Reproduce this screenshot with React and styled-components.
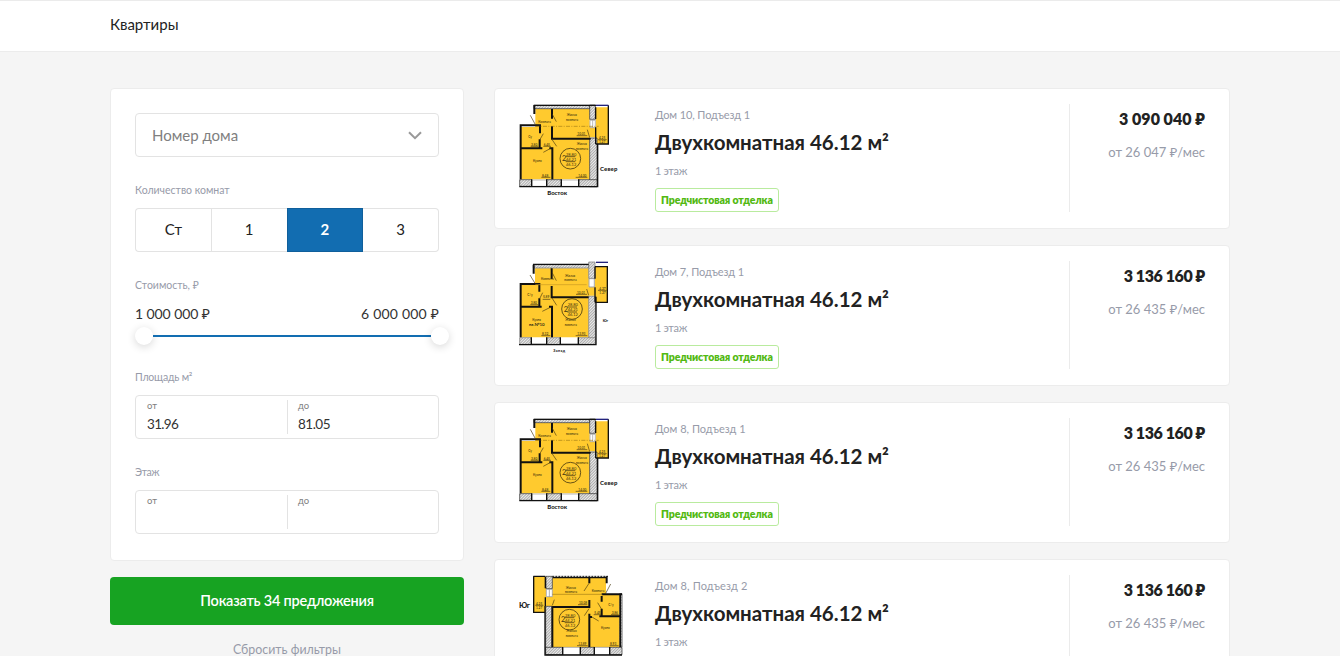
import React from 'react';
import styled, { createGlobalStyle } from 'styled-components';

const GlobalStyle = createGlobalStyle`
  * { box-sizing: border-box; }
  html, body { margin: 0; }
  body {
    background: #f5f5f5;
    color: #222;
    font-family: Lato, "Noto Sans", sans-serif;
  }
  button, input { font-family: inherit; }
`;

const Page = styled.div`
  height: 656px;
  overflow: hidden;
`;

const Text = styled.span`
  letter-spacing: ${(p) => p.$track || 0}px;
  white-space: nowrap;
`;

/* Header */
const Header = styled.header`
  height: 52px;
  background: #fff;
  border-top: 1px solid #ebebeb;
  border-bottom: 1px solid #ececec;
`;
const Container = styled.div`
  width: 1120px;
  margin: 0 auto;
`;
const Title = styled.h1`
  margin: 0;
  font-size: 15px;
  font-weight: 400;
  line-height: 47px;
`;

/* Layout */
const Columns = styled(Container)`
  display: flex;
  gap: 30px;
  padding-top: 36px;
  height: 604px;
`;
const Sidebar = styled.aside`
  width: 354px;
  flex: none;
`;
const List = styled.main`
  width: 736px;
  display: flex;
  flex-direction: column;
  gap: 16px;
`;

/* Filter panel */
const Panel = styled.section`
  height: 473px;
  padding: 24px;
  background: #fff;
  border: 1px solid #ececec;
  border-radius: 4px;
`;
const Select = styled.div`
  height: 44px;
  display: flex;
  align-items: center;
  justify-content: space-between;
  padding: 0 16px;
  border: 1px solid #e3e3e3;
  border-radius: 4px;
  color: #808080;
  font-size: 15px;
  line-height: 20px;

  ${Text} { margin-bottom: 1px; }
`;
const Label = styled.div`
  height: 16px;
  margin: ${(p) => p.$top}px 0 ${(p) => p.$bottom}px;
  color: #979ba9;
  font-size: 10.5px;
  line-height: 16px;
`;
const Rooms = styled.div`
  display: flex;
  height: 44px;
`;
const Room = styled.button`
  flex: 1;
  padding: 0 0 2px;
  background: ${(p) => (p.$active ? '#126db1' : '#fff')};
  border: 1px solid ${(p) => (p.$active ? '#0f5f9b' : '#e3e3e3')};
  border-right-width: ${(p) => (p.$active || p.$last ? 1 : 0)}px;
  border-left-width: ${(p) => (p.$last ? 0 : 1)}px;
  border-radius: ${(p) => (p.$first ? '4px 0 0 4px' : p.$last ? '0 4px 4px 0' : 0)};
  color: ${(p) => (p.$active ? '#fff' : '#222')};
  font-size: 15px;
  font-weight: ${(p) => (p.$active ? 700 : 400)};
`;
const PriceRange = styled.div`
  display: flex;
  justify-content: space-between;
  color: #333;
  font-size: 14px;
  line-height: 20px;
`;
const Slider = styled.div`
  display: flex;
  align-items: center;
  height: 18px;
  margin: 3px -10px 0 0;
`;
const Handle = styled.span`
  width: 18px;
  height: 18px;
  border-radius: 50%;
  background: #fff;
  box-shadow: 0 2px 8px rgba(0, 0, 0, 0.16);
`;
const Track = styled.span`
  flex: 1;
  height: 2px;
  background: #126db1;
`;
const Range = styled.div`
  display: flex;
  height: 44px;
  padding: 4px 0;
  border: 1px solid #e3e3e3;
  border-radius: 4px;
`;
const Bound = styled.div`
  width: ${(p) => (p.$first ? 152 : 150)}px;
  padding-left: ${(p) => (p.$first ? 11 : 10)}px;
  border-right: ${(p) => (p.$first ? '1px solid #e3e3e3' : 0)};
`;
const BoundName = styled.div`
  color: #808080;
  font-size: 9.5px;
  line-height: 12px;
`;
const BoundValue = styled.div`
  padding-top: 2px;
  color: #333;
  font-size: 13.5px;
  line-height: 20px;
`;
const Submit = styled.button`
  display: block;
  width: 100%;
  height: 48px;
  margin-top: 16px;
  padding: 0 0 2px;
  border: 0;
  border-radius: 4px;
  background: #17a322;
  color: #fff;
  font-size: 14.5px;
  font-weight: 600;
`;
const Reset = styled.div`
  margin-top: 15px;
  color: #979ba9;
  font-size: 12.4px;
  line-height: 19px;
  text-align: center;
`;

/* Apartment card */
const Card = styled.article`
  display: flex;
  flex: none;
  height: 141px;
  padding: 15px 24px 16px;
  background: #fff;
  border: 1px solid #ececec;
  border-radius: 4px;
`;
const Plan = styled.svg`
  width: 106px;
  height: 92px;
  margin-right: 30px;
  font-family: Lato, "Noto Sans", sans-serif;
`;
const Info = styled.div`
  display: flex;
  flex: 1;
  flex-direction: column;
  align-items: flex-start;
`;
const Meta = styled.div`
  margin-top: ${(p) => p.$top}px;
  color: #979ba9;
  font-size: 11px;
  line-height: 18px;
`;
const Name = styled.h2`
  margin: 4px 0 0;
  font-size: 20.5px;
  font-weight: 700;
  line-height: 28px;
`;
const Tag = styled.div`
  width: 124px;
  height: 24px;
  margin-top: 8px;
  padding-left: 5px;
  border: 1px solid #b9eb9e;
  border-radius: 3px;
  color: #52b912;
  font-size: 10.5px;
  font-weight: 800;
  line-height: 22px;
`;
const Cost = styled.div`
  width: 136px;
  height: 108px;
  border-left: 1px solid #ebebeb;
  text-align: right;
`;
const Price = styled.div`
  margin-top: 5px;
  font-size: 16px;
  font-weight: 800;
  line-height: 20px;
`;
const Monthly = styled.div`
  margin-top: 13px;
  color: #979ba9;
  font-size: 13px;
  line-height: 20px;
`;

const YELLOW = '#ffca2e';

function Hatch({ id }) {
  return (
    <defs>
      <pattern id={id} width="6" height="6" patternUnits="userSpaceOnUse" patternTransform="rotate(45)">
        <rect width="6" height="6" fill="#ececec" />
        <rect width="2" height="6" fill="#8c8c8c" />
      </pattern>
    </defs>
  );
}

function Stamp({ x, y }) {
  return (
    <g>
      <circle cx={x} cy={y} r="31" fill="none" stroke="#4a3b10" strokeWidth="2.5" />
      <g fill="#3d3110" stroke="none" fontSize="12">
        <text x={x - 25} y={y + 8} fontSize="22">2</text>
        <text x={x - 13} y={y - 9}>28.80</text>
        <text x={x - 13} y={y + 6}>44.21</text>
        <text x={x - 13} y={y + 21}>46.12</text>
      </g>
      <path d={`M${x - 14} ${y - 6}h29M${x - 14} ${y + 9}h29`} stroke="#2d240c" strokeWidth="2" />
    </g>
  );
}

function EastPlan({ id }) {
  const hatch = `url(#${id})`;
  return (
    <Plan viewBox="87 72 318 276">
      <Hatch id={id} />
      <path fill={YELLOW} d="M136 87H299V298H92V141H136ZM299 140H317V82H355V192H317V172H299Z" />
      <g fill={hatch} stroke="#222" strokeWidth="2">
        <path d="M132 76H299V86H132Z" />
        <path d="M299 75H316V118H299ZM299 174H321V320H299Z" />
        <path d="M89 299H125V319H89ZM170 299H214V319H170ZM266 299H321V320H266Z" />
      </g>
      <path fill="#fff" stroke="#999" strokeWidth="2" d="M300 121H316V143H300Z" />
      <path stroke="#999" strokeWidth="2" d="M308 121V143M125 300H170M125 319H170M214 300H266M214 319H266" />
      <g fill="none" stroke="#111" strokeWidth="6">
        <path d="M133 76V102M89 136H150V160M92 136V298M149 178V205M92 205H157M178 205H187V298M186 87V116M186 138V176H299V174" />
        <path strokeWidth="4" d="M131 76H318M355 76V192H317M317 82V117M317 142V192M88 320H323V194M125 298V319M170 298V319M214 298V319M266 298V319" />
      </g>
      <path d="M318 76H355" stroke="#22227c" strokeWidth="4" />
      <path fill="none" stroke="#4a3b10" strokeWidth="2" d="M121 106L135 132M187 103L199 125M160 161L149 180M187 180L200 199M160 217L182 205M292 149L299 173M260 167H292M257 292H292M154 292H181M122 199H145M160 199H183M324 179H350" />
      <path d="M136 139H326" stroke="#a57e16" strokeWidth="2" strokeDasharray="12 4 3 4" />
      <g fill="#4a3b10" fontSize="9.5" fontWeight="600">
        <text x="230" y="109">Жилая</text><text x="228" y="123">комната</text>
        <text x="145" y="129">Комната</text><text x="115" y="173">Су</text>
        <text x="260" y="196">Жилая</text><text x="258" y="209">комната</text>
        <text x="129" y="247">Кухня</text>
        <text x="262" y="165">10.01</text><text x="265" y="290">14.00</text>
        <text x="156" y="291">8.48</text><text x="123" y="198">3.80</text>
        <text x="161" y="198">6.45</text><text x="327" y="177">4.25</text><text x="327" y="190">1.27</text>
      </g>
      <Stamp x={241} y={236} />
      <g fill="#222" fontSize="18" fontWeight="900">
        <text x="330" y="272" textLength="52">Север</text>
        <text x="172" y="344" textLength="59">Восток</text>
      </g>
    </Plan>
  );
}

function WestPlan({ id }) {
  const hatch = `url(#${id})`;
  return (
    <Plan viewBox="87 63 318 276">
      <Hatch id={id} />
      <path fill={YELLOW} d="M135 85H296V292H92V134H135ZM296 142H315V81H352V187H315V167H296Z" />
      <g fill={hatch} stroke="#777" strokeWidth="2">
        <path d="M130 74H296V84H130ZM296 66H315V115H296ZM296 169H316V313H296Z" />
        <path d="M89 293H124V313H89ZM170 293H211V313H170ZM265 293H316V313H265Z" />
      </g>
      <path fill="#fff" stroke="#777" strokeWidth="2" d="M297 116H313V141H297Z" />
      <path stroke="#777" strokeWidth="3" d="M124 312H170M211 312H265" />
      <g fill="none" stroke="#111" strokeWidth="6">
        <path d="M131 74V101M89 132H148V155M92 132V292M148 175V200M92 200H155M177 200H186V292M185 85V117M185 138V172H296" />
        <path strokeWidth="4" d="M129 73H296M315 80H352V187H315M315 80V116M315 142V187M87 314H318V170M124 292V314M170 292V314M211 292V314M265 292V314" />
      </g>
      <path d="M318 67H354" stroke="#22227c" strokeWidth="4" />
      <path fill="none" stroke="#4a3b10" strokeWidth="2" d="M120 105L135 130M187 99L199 122M158 158L149 176M186 174L200 196M157 214L181 202M290 147L296 166M258 163H291M257 287H292M154 287H181M121 194H145M158 178H181M324 151H350" />
      <path d="M136 134H290" stroke="#c99b22" strokeWidth="2" />
      <g fill="#4a3b10" fontSize="9.5" fontWeight="600">
        <text x="225" y="110">Жилая</text><text x="223" y="123">комната</text>
        <text x="153" y="121">Комната</text><text x="112" y="169">С/у</text>
        <text x="226" y="244">Жилая</text><text x="224" y="257">комната</text>
        <text x="127" y="243">Кухня</text><text x="117" y="257" fontSize="13" fill="#111">кв.№10</text>
        <text x="261" y="161">10.01</text><text x="262" y="285">13.93</text>
        <text x="156" y="285">8.32</text><text x="122" y="192">3.80</text>
        <text x="159" y="175">5.89</text><text x="328" y="149">4.27</text><text x="328" y="161">1.27</text>
      </g>
      <Stamp x={246} y={207} />
      <g fill="#222" fontSize="11" fontWeight="900">
        <text x="338" y="245">Юг</text><text x="190" y="336" textLength="35">Запад</text>
      </g>
    </Plan>
  );
}

function SouthPlan({ id }) {
  const hatch = `url(#${id})`;
  return (
    <Plan viewBox="87 75 318 276">
      <Hatch id={id} />
      <path fill={YELLOW} d="M187 84H348V133H391V291H187V168H168V187H131V80H168V141H187Z" />
      <g fill={hatch} stroke="#222" strokeWidth="2">
        <path d="M168 79H187V116H168ZM167 169H187V314H167ZM389 131H396V291H389Z" />
        <path d="M167 292H218V314H167ZM271 292H313V314H271ZM359 292H396V314H359Z" />
      </g>
      <path fill="#fff" stroke="#888" strokeWidth="2" d="M169 118H187V140H169Z" />
      <path stroke="#888" strokeWidth="2" d="M178 118V140M218 292H271M218 314H271M313 292H359M313 314H359" />
      <g fill="none" stroke="#111" strokeWidth="6">
        <path d="M187 171H298V150M298 84V100M298 191V291M298 201H306M335 138V155M335 176V199M328 199H391M335 133H396M350 79V100M187 169V291" />
        <path strokeWidth="4" d="M130 79H166M131 79V187H166M166 80V115M166 142V168M165 168V315H396M391 133V291M218 291V315M271 291V315M313 291V315M359 291V315M188 83H348" />
        <path strokeWidth="3" strokeDasharray="6 3" d="M187 79H354" />
      </g>
      <path fill="none" stroke="#4a3b10" strokeWidth="2" d="M297 100L282 123M362 102L346 132M323 158L335 178M297 176L283 197M304 200L326 213M193 149L187 166M264 164H292M261 287H293M359 287H386M363 194H386M311 194H334M136 166H160" />
      <path d="M187 133H337" stroke="#a57e16" strokeWidth="2" />
      <g fill="#4a3b10" fontSize="9.5" fontWeight="600">
        <text x="227" y="117">Жилая</text><text x="225" y="130">комната</text>
        <text x="305" y="127">Комната</text><text x="355" y="167">С/у</text>
        <text x="229" y="247">Жилая</text><text x="227" y="260">комната</text>
        <text x="333" y="237">Кухня</text>
        <text x="267" y="162">10.08</text><text x="265" y="285">13.89</text>
        <text x="360" y="285">8.93</text><text x="365" y="192">3.86</text>
        <text x="313" y="192">5.45</text><text x="138" y="164">4.25</text><text x="138" y="177">1.27</text>
      </g>
      <Stamp x={238} y={209} />
      <text x="87" y="174" fill="#222" fontSize="23" fontWeight="900" textLength="33">Юг</text>
    </Plan>
  );
}

const flats = [
  { PlanView: EastPlan, place: 'Дом 10, Подъезд 1', placeTrack: -0.11, price: '3 090 040 ₽', priceTrack: 0, monthly: 'от 26 047 ₽/мес', finish: 'Предчистовая отделка' },
  { PlanView: WestPlan, place: 'Дом 7, Подъезд 1', placeTrack: -0.09, price: '3 136 160 ₽', priceTrack: -0.42, monthly: 'от 26 435 ₽/мес', finish: 'Предчистовая отделка' },
  { PlanView: EastPlan, place: 'Дом 8, Подъезд 1', placeTrack: 0.01, price: '3 136 160 ₽', priceTrack: -0.42, monthly: 'от 26 435 ₽/мес', finish: 'Предчистовая отделка' },
  { PlanView: SouthPlan, place: 'Дом 8, Подъезд 2', placeTrack: 0.12, price: '3 136 160 ₽', priceTrack: -0.42, monthly: 'от 26 435 ₽/мес' },
];

function FlatCard({ flat, index }) {
  const { PlanView } = flat;
  return (
    <Card>
      <PlanView id={`hatch-${index}`} />
      <Info>
        <Meta $top={2}><Text $track={flat.placeTrack}>{flat.place}</Text></Meta>
        <Name><Text>Двухкомнатная 46.12 м²</Text></Name>
        <Meta $top={6}><Text $track={-0.32}>1 этаж</Text></Meta>
        {flat.finish && <Tag><Text $track={-0.12}>{flat.finish}</Text></Tag>}
      </Info>
      <Cost>
        <Price><Text $track={flat.priceTrack}>{flat.price}</Text></Price>
        <Monthly><Text>{flat.monthly}</Text></Monthly>
      </Cost>
    </Card>
  );
}

function RangeField({ from, to }) {
  return (
    <Range>
      <Bound $first>
        <BoundName><Text>от</Text></BoundName>
        <BoundValue><Text $track={-0.68}>{from}</Text></BoundValue>
      </Bound>
      <Bound>
        <BoundName><Text>до</Text></BoundName>
        <BoundValue><Text $track={-0.5}>{to}</Text></BoundValue>
      </Bound>
    </Range>
  );
}

export default function App() {
  return (
    <Page>
      <GlobalStyle />
      <Header>
        <Container><Title><Text>Квартиры</Text></Title></Container>
      </Header>
      <Columns>
        <Sidebar>
          <Panel>
            <Select>
              <Text>Номер дома</Text>
              <svg width="14" height="9" viewBox="0 0 14 9" fill="none" stroke="#999" strokeWidth="2">
                <path d="M1 1.2L7 7.2L13 1.2" />
              </svg>
            </Select>
            <Label $top={25} $bottom={10}><Text>Количество комнат</Text></Label>
            <Rooms>
              <Room $first>Ст</Room>
              <Room>1</Room>
              <Room $active>2</Room>
              <Room $last>3</Room>
            </Rooms>
            <Label $top={25} $bottom={11}><Text>Стоимость, ₽</Text></Label>
            <PriceRange>
              <Text $track={-0.08}>1 000 000 ₽</Text>
              <Text $track={0.2}>6 000 000 ₽</Text>
            </PriceRange>
            <Slider><Handle /><Track /><Handle /></Slider>
            <Label $top={24} $bottom={10}><Text $track={-0.2}>Площадь м²</Text></Label>
            <RangeField from="31.96" to="81.05" />
            <Label $top={25} $bottom={10}><Text $track={-0.4}>Этаж</Text></Label>
            <RangeField />
          </Panel>
          <Submit><Text $track={-0.22}>Показать 34 предложения</Text></Submit>
          <Reset><Text>Сбросить фильтры</Text></Reset>
        </Sidebar>
        <List>
          {flats.map((flat, i) => <FlatCard key={i} flat={flat} index={i} />)}
        </List>
      </Columns>
    </Page>
  );
}
